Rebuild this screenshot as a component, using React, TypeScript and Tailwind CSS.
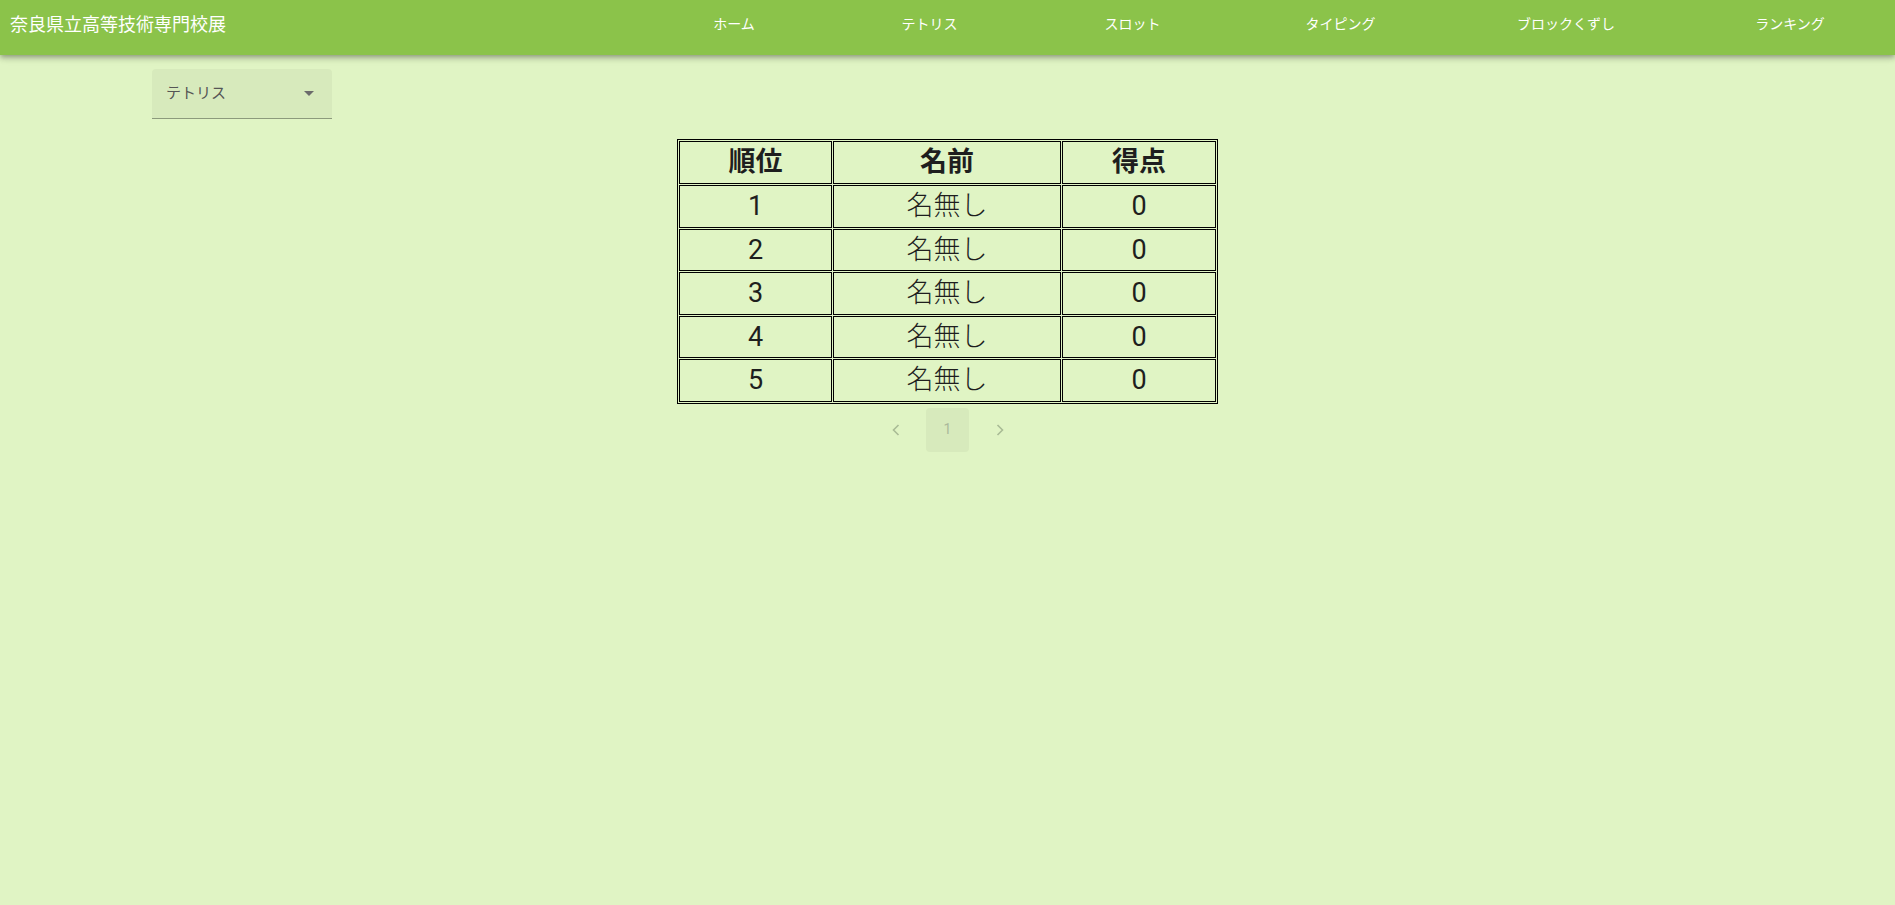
import React from "react";

const font = { fontFamily: 'Roboto, "Noto Sans CJK JP", sans-serif' };

const navItems = [
  { label: "ホーム", w: "w-[188px]" },
  { label: "テトリス", w: "w-[203px]" },
  { label: "スロット", w: "w-[203px]" },
  { label: "タイピング", w: "w-[213px]" },
  { label: "ブロックくずし", w: "w-[238px]" },
  { label: "ランキング", w: "w-[210px]" },
];

const rows = [1, 2, 3, 4, 5];

export default function App() {
  return (
    <div className="min-h-[905px] w-full bg-[#e0f4c4]" style={font}>
      <header className="relative z-10 h-[55px] w-full bg-[#8bc34a] shadow-[0_2px_4px_-1px_rgba(0,0,0,0.2),0_4px_5px_0_rgba(0,0,0,0.14),0_1px_10px_0_rgba(0,0,0,0.12)]">
        <div className="flex h-[49px] items-center">
          <div className="pl-[10px] text-[18px] text-white whitespace-nowrap">奈良県立高等技術専門校展</div>
          <nav className="ml-auto flex h-full items-center">
            {navItems.map((n) => (
              <div
                key={n.label}
                className={`${n.w} flex h-full items-center justify-center text-[14px] text-white whitespace-nowrap`}
              >
                {n.label}
              </div>
            ))}
          </nav>
        </div>
      </header>

      <div className="pl-[152px] pt-[14px]">
        <div className="relative flex h-[50px] w-[180px] items-center rounded-t-[4px] border-b border-[#8c9a7c] bg-[#d7eabc] pl-[14px] pr-[18px]">
          <span className="text-[15px] text-[#555]">テトリス</span>
          <svg className="ml-auto" width="10" height="6" viewBox="0 0 10 6">
            <path d="M0 0 L10 0 L5 5 Z" fill="#6b6b6b" />
          </svg>
        </div>
      </div>

      <div className="mt-[20px] flex justify-center">
        <table className="w-[540px] table-fixed border-separate border-spacing-px border border-black text-[27px] text-[#1e1e1e]">
          <colgroup>
            <col className="w-[153px]" />
            <col className="w-[228px]" />
            <col className="w-[154px]" />
          </colgroup>
          <thead>
            <tr>
              <th className="h-[43px] border border-black p-0 text-center font-bold leading-[41px]">順位</th>
              <th className="h-[43px] border border-black p-0 text-center font-bold leading-[41px]">名前</th>
              <th className="h-[43px] border border-black p-0 text-center font-bold leading-[41px]">得点</th>
            </tr>
          </thead>
          <tbody>
            {rows.map((r) => (
              <tr key={r}>
                <td className="h-[42.5px] border border-black p-0 text-center leading-[40px]">{r}</td>
                <td className="h-[42.5px] border border-black p-0 text-center font-light leading-[40px]">名無し</td>
                <td className="h-[42.5px] border border-black p-0 text-center leading-[40px]">0</td>
              </tr>
            ))}
          </tbody>
        </table>
      </div>

      <div className="mt-[4px] flex items-center justify-center gap-[9px]">
        <div className="flex h-[44px] w-[43px] items-center justify-center">
          <svg width="10" height="14" viewBox="0 0 10 14">
            <path d="M7.5 2 L2.5 7 L7.5 12" fill="none" stroke="#a9bb95" strokeWidth="1.6" />
          </svg>
        </div>
        <div className="flex h-[44px] w-[43px] items-center justify-center rounded-[4px] bg-[#d7eabc] text-[14px] text-[#aab99b]">
          1
        </div>
        <div className="flex h-[44px] w-[43px] items-center justify-center">
          <svg width="10" height="14" viewBox="0 0 10 14">
            <path d="M2.5 2 L7.5 7 L2.5 12" fill="none" stroke="#a9bb95" strokeWidth="1.6" />
          </svg>
        </div>
      </div>
    </div>
  );
}
